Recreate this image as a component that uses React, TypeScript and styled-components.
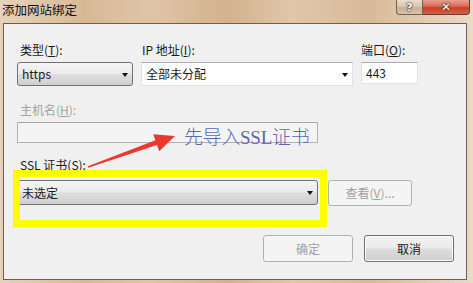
import React from "react";
import styled, { createGlobalStyle } from "styled-components";

const GlobalStyle = createGlobalStyle`
  html, body { margin: 0; padding: 0; overflow: hidden; background: #d9c0a3; }
  * { box-sizing: border-box; }
`;

const UI_FONT = `"Noto Sans CJK SC", "Noto Sans", sans-serif`;

const Window = styled.div`
  position: relative;
  width: 473px;
  height: 283px;
  font-family: ${UI_FONT};
  font-size: 12px;
  color: #1a1a1a;
  background: linear-gradient(90deg, #e6d2bb 0%, #d7b996 18%, #dfc5a7 32%, #d3b28e 48%, #e0c7aa 62%, #d8ba98 78%, #eadac6 100%);
  display: flex;
  flex-direction: column;
`;

const TitleBar = styled.div`
  height: 23px;
  display: flex;
  justify-content: space-between;
  align-items: flex-start;
  flex-shrink: 0;
`;

const Title = styled.div`
  padding: 2px 0 0 2px;
  line-height: 16px;
  font-size: 12.5px;
  color: #111;
`;

const CaptionButtons = styled.div`
  display: flex;
  margin-right: 3px;
`;

const CaptionButton = styled.div<{ $close?: boolean }>`
  width: ${(p) => (p.$close ? 47 : 27)}px;
  height: 15px;
  display: flex;
  align-items: center;
  justify-content: center;
  border: 1px solid ${(p) => (p.$close ? "#6a3f33" : "#75614f")};
  border-top: none;
  border-left: ${(p) => (p.$close ? "none" : "1px solid #75614f")};
  border-radius: ${(p) => (p.$close ? "0 0 4px 0" : "0 0 0 4px")};
  background: ${(p) =>
    p.$close
      ? "linear-gradient(180deg, #e9a293 0%, #d86a55 45%, #c8412c 55%, #d3604a 100%)"
      : "linear-gradient(180deg, #eadbcc 0%, #dac5b0 45%, #c9b096 55%, #d8c2ab 100%)"};
  color: #fff;
  font-family: "DejaVu Sans", sans-serif;
  font-weight: bold;
  font-size: ${(p) => (p.$close ? 12 : 11)}px;
  line-height: 1;
  text-shadow: 0 0 1px #3a2a20, 0 0 1px #3a2a20, 0 0 2px #3a2a20;
`;

const Client = styled.div`
  margin: 0 6px 3px 3px;
  flex: 1;
  border: 1px solid #6f5e4e;
  background: #f0f0f0;
  padding: 18px 0 0 13px;
  display: flex;
  flex-direction: column;
`;

const TopRow = styled.div`
  display: flex;
  column-gap: 8px;
`;

const Field = styled.div`
  display: flex;
  flex-direction: column;
  gap: 4px;
`;

const Label = styled.div<{ $indent?: number; $disabled?: boolean }>`
  line-height: 16px;
  height: 16px;
  padding-left: ${(p) => p.$indent ?? 0}px;
  color: ${(p) => (p.$disabled ? "#a3a3a3" : "#1a1a1a")};
  white-space: nowrap;
`;

const Key = styled.span`
  text-decoration: underline;
  text-underline-offset: 1px;
`;

const Combo = styled.div<{ $w: number; $h?: number; $editable?: boolean }>`
  width: ${(p) => p.$w}px;
  height: ${(p) => p.$h ?? 24}px;
  display: flex;
  align-items: center;
  justify-content: space-between;
  padding: 0 4px 0 4px;
  border-radius: ${(p) => (p.$editable ? 1 : 3)}px;
  border: 1px solid ${(p) => (p.$editable ? "#dde3ea" : "#707070")};
  border-top-color: ${(p) => (p.$editable ? "#abadb3" : "#707070")};
  background: ${(p) =>
    p.$editable
      ? "#ffffff"
      : "linear-gradient(180deg, #f4f4f4 0%, #ebebeb 48%, #dedede 52%, #cfcfcf 100%)"};
  color: #1a1a1a;
`;

const ComboText = styled.span`
  line-height: 16px;
`;

const DropArrow = styled.span`
  width: 0;
  height: 0;
  border-left: 3.5px solid transparent;
  border-right: 3.5px solid transparent;
  border-top: 4px solid #111;
  margin-top: 1px;
`;

const TextBox = styled.div<{ $w: number; $h: number; $disabled?: boolean }>`
  width: ${(p) => p.$w}px;
  height: ${(p) => p.$h}px;
  border: 1px solid ${(p) => (p.$disabled ? "#b2b2b2" : "#dde3ea")};
  border-top-color: ${(p) => (p.$disabled ? "#a8a8a8" : "#abadb3")};
  border-radius: 1px;
  background: ${(p) => (p.$disabled ? "#f4f4f4" : "#ffffff")};
  padding: 0 4px;
  display: flex;
  align-items: center;
  line-height: 16px;
`;

const HostField = styled(Field)`
  margin-top: 16px;
`;

const SslField = styled(Field)`
  margin-top: 14px;
  gap: 7px;
`;

const SslRow = styled.div`
  display: flex;
  align-items: flex-start;
  gap: 10px;
`;

const Button = styled.div<{ $w: number; $h: number; $disabled?: boolean }>`
  width: ${(p) => p.$w}px;
  height: ${(p) => p.$h}px;
  display: flex;
  align-items: center;
  justify-content: center;
  border-radius: 3px;
  border: 1px solid ${(p) => (p.$disabled ? "#adb2b5" : "#707070")};
  background: ${(p) =>
    p.$disabled
      ? "#f4f4f4"
      : "linear-gradient(180deg, #f2f2f2 0%, #ebebeb 48%, #dddddd 52%, #cfcfcf 100%)"};
  box-shadow: ${(p) => (p.$disabled ? "none" : "inset 0 0 0 1px #fcfcfc")};
  color: ${(p) => (p.$disabled ? "#a0a0a0" : "#1a1a1a")};
  line-height: 16px;
`;

const ButtonRow = styled.div`
  margin-top: 29px;
  display: flex;
  justify-content: flex-end;
  gap: 11px;
  padding-right: 12px;
`;

const HighlightBox = styled.div`
  position: absolute;
  left: 13px;
  top: 170px;
  width: 314px;
  height: 57px;
  border: 7px solid #ffff00;
  pointer-events: none;
`;

const ArrowLayer = styled.svg`
  position: absolute;
  left: 0;
  top: 0;
  pointer-events: none;
`;

const Annotation = styled.div`
  position: absolute;
  left: 184px;
  top: 127px;
  font-family: "Liberation Serif", "Noto Sans CJK SC", serif;
  font-size: 19px;
  font-weight: 300;
  line-height: 22px;
  color: #5a69b2;
  white-space: nowrap;
  letter-spacing: -0.3px;
`;

export default function App() {
  return (
    <>
      <GlobalStyle />
      <Window>
        <TitleBar>
          <Title>添加网站绑定</Title>
          <CaptionButtons>
            <CaptionButton>?</CaptionButton>
            <CaptionButton $close>✕</CaptionButton>
          </CaptionButtons>
        </TitleBar>
        <Client>
          <TopRow>
            <Field>
              <Label $indent={3}>
                类型(<Key>T</Key>):
              </Label>
              <Combo $w={116}>
                <ComboText>https</ComboText>
                <DropArrow />
              </Combo>
            </Field>
            <Field>
              <Label $indent={1}>
                IP 地址(<Key>I</Key>):
              </Label>
              <Combo $w={212} $editable>
                <ComboText>全部未分配</ComboText>
                <DropArrow />
              </Combo>
            </Field>
            <Field>
              <Label>
                端口(<Key>O</Key>):
              </Label>
              <TextBox $w={57} $h={22}>
                443
              </TextBox>
            </Field>
          </TopRow>
          <HostField>
            <Label $indent={3} $disabled>
              主机名(<Key>H</Key>):
            </Label>
            <TextBox $w={301} $h={21} $disabled />
          </HostField>
          <SslField>
            <Label $indent={3}>
              SSL 证书(<Key>S</Key>):
            </Label>
            <SslRow>
              <Combo $w={301} $h={25}>
                <ComboText>未选定</ComboText>
                <DropArrow />
              </Combo>
              <Button $w={84} $h={26} $disabled>
                查看(<Key>V</Key>)...
              </Button>
            </SslRow>
          </SslField>
          <ButtonRow>
            <Button $w={90} $h={27} $disabled>
              确定
            </Button>
            <Button $w={90} $h={27}>
              取消
            </Button>
          </ButtonRow>
        </Client>
        <HighlightBox />
        <ArrowLayer width={473} height={283} viewBox="0 0 473 283">
          <polygon
            points="88.2,167.7 87.8,166.3 155.4,140.3 153.2,134.2 175,136 159.2,151.2 157,145"
            fill="#ea3a30"
          />
        </ArrowLayer>
        <Annotation>先导入SSL证书</Annotation>
      </Window>
    </>
  );
}
